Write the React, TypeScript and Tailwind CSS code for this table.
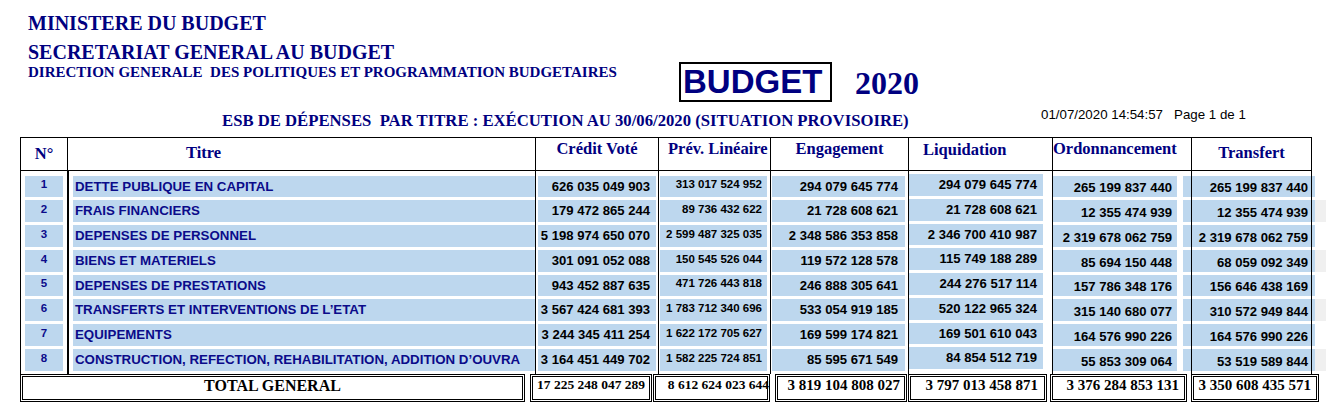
const serif = "font-['Liberation_Serif','Times_New_Roman',serif]";
const sans = "font-['Liberation_Sans',Arial,sans-serif]";

type Col = {
  w: string;
  hw: string;
  head: string;
  headCls: string;
  blue: string;
  text: string;
};

const cols: Col[] = [
  { w: "w-[46px]", hw: "w-[46px]", head: "N°", headCls: "justify-center pt-[7px]", blue: "mx-[4px]", text: "justify-center text-[11.5px] pb-[3px] text-[#0b0b8a]" },
  { w: "w-[466px]", hw: "w-[467px]", head: "Titre", headCls: "pl-[118px] pt-[6px]", blue: "ml-[4px]", text: "pl-[2px] text-[13.3px] text-[#0b0b8a]" },
  { w: "w-[122px]", hw: "w-[122px]", head: "Crédit Voté", headCls: "justify-center pt-[2px]", blue: "mx-[2px]", text: "justify-end pr-[6px] text-[13.1px]" },
  { w: "w-[111px]", hw: "w-[111px]", head: "Prév. Linéaire", headCls: "pl-[9px] pt-[2px]", blue: "ml-[1px] mr-[3px]", text: "justify-end pr-[5px] text-[11.5px] pb-[3px]" },
  { w: "w-[137px]", hw: "w-[137px]", head: "Engagement", headCls: "justify-center pt-[2px]", blue: "ml-[1px] mr-[3px]", text: "justify-end pr-[7px] text-[13.1px]" },
  { w: "w-[143px]", hw: "w-[143px]", head: "Liquidation", headCls: "pl-[14px] pt-[3px]", blue: "mr-[9px] -mt-[1.5px]", text: "justify-end pr-[6px] text-[13.1px]" },
  { w: "w-[138px]", hw: "w-[138px]", head: "Ordonnancement", headCls: "pt-[2px]", blue: "mr-[14px]", text: "justify-end pr-[5px] text-[13.1px] pt-[3px]" },
  { w: "w-[119px]", hw: "w-[119px]", head: "Transfert", headCls: "justify-center pt-[6px]", blue: "-ml-[9px] -mr-[4px]", text: "justify-end pr-[7px] text-[13.1px] pt-[3px]" },
];

const rows: string[][] = [
  ["1", "DETTE PUBLIQUE EN CAPITAL", "626 035 049 903", "313 017 524 952", "294 079 645 774", "294 079 645 774", "265 199 837 440", "265 199 837 440"],
  ["2", "FRAIS FINANCIERS", "179 472 865 244", "89 736 432 622", "21 728 608 621", "21 728 608 621", "12 355 474 939", "12 355 474 939"],
  ["3", "DEPENSES DE PERSONNEL", "5 198 974 650 070", "2 599 487 325 035", "2 348 586 353 858", "2 346 700 410 987", "2 319 678 062 759", "2 319 678 062 759"],
  ["4", "BIENS ET MATERIELS", "301 091 052 088", "150 545 526 044", "119 572 128 578", "115 749 188 289", "85 694 150 448", "68 059 092 349"],
  ["5", "DEPENSES DE PRESTATIONS", "943 452 887 635", "471 726 443 818", "246 888 305 641", "244 276 517 114", "157 786 348 176", "156 646 438 169"],
  ["6", "TRANSFERTS ET INTERVENTIONS DE L’ETAT", "3 567 424 681 393", "1 783 712 340 696", "533 054 919 185", "520 122 965 324", "315 140 680 077", "310 572 949 844"],
  ["7", "EQUIPEMENTS", "3 244 345 411 254", "1 622 172 705 627", "169 599 174 821", "169 501 610 043", "164 576 990 226", "164 576 990 226"],
  ["8", "CONSTRUCTION, REFECTION, REHABILITATION, ADDITION D’OUVRA", "3 164 451 449 702", "1 582 225 724 851", "85 595 671 549", "84 854 512 719", "55 853 309 064", "53 519 589 844"],
];

const totals = [
  { w: "w-[505px]", ml: "", v: "TOTAL GENERAL", cls: "justify-center pt-[2px] text-[16px]" },
  { w: "w-[122px]", ml: "ml-[5px]", v: "17 225 248 047 289", cls: "justify-center pt-[1px] text-[13.5px]" },
  { w: "w-[117px]", ml: "ml-[1px]", v: "8 612 624 023 644", cls: "justify-end pt-[1px] text-[13.5px]" },
  { w: "w-[132px]", ml: "ml-[5px]", v: "3 819 104 808 027", cls: "justify-end pr-[6px] pt-[1.5px] text-[15px]" },
  { w: "w-[139px]", ml: "ml-[1px]", v: "3 797 013 458 871", cls: "justify-end pr-[8px] pt-[1px] text-[15px]" },
  { w: "w-[137px]", ml: "ml-[3px]", v: "3 376 284 853 131", cls: "justify-end pr-[7px] pt-[1.5px] text-[15px]" },
  { w: "w-[128px]", ml: "ml-[4px]", v: "3 350 608 435 571", cls: "justify-end pr-[7px] pt-[1px] text-[15px]" },
];

function Sep({ wide }: { wide?: boolean }) {
  return <div className={`${wide ? "w-[2px]" : "w-[1px]"} relative z-10 shrink-0 self-stretch bg-black`} />;
}

export default function App() {
  return (
    <div className="h-[416px] w-[1330px] overflow-hidden bg-white">
      <div className={`pl-[28px] pt-[12.5px] ${serif} font-bold text-[#000080]`}>
        <div className="text-[20px] leading-[20px]">MINISTERE DU BUDGET</div>
        <div className="mt-[9px] text-[20px] leading-[20px]">SECRETARIAT GENERAL AU BUDGET</div>
        <div className="flex items-start">
          <div className="w-[651px] whitespace-pre pt-[3px] text-[15px] leading-[15px]">
            DIRECTION GENERALE  DES POLITIQUES ET PROGRAMMATION BUDGETAIRES
          </div>
          <div className={`h-[40px] w-[153px] border-2 border-black pl-[2px] ${sans} text-[33px] leading-[36px]`}>
            BUDGET
          </div>
          <div className="ml-[23px] mt-[3px] text-[32px] leading-[36px]">2020</div>
        </div>
      </div>

      <div className="mt-[6.5px] flex items-start">
        <div className={`ml-[222px] mt-[4px] w-[819px] whitespace-pre ${serif} text-[16.7px] font-bold leading-[18px] text-[#000080]`}>
          ESB DE DÉPENSES  PAR TITRE : EXÉCUTION AU 30/06/2020 (SITUATION PROVISOIRE)
        </div>
        <div className={`whitespace-pre ${sans} text-[13.3px] leading-[14px] text-black`}>
          01/07/2020 14:54:57   Page 1 de 1
        </div>
      </div>

      <div className="ml-[20px] mt-[6.7px]">
        {/* header */}
        <div className={`flex h-[34px] w-[1292px] border-y border-black ${serif} text-[16.5px] font-bold leading-[18px] text-[#000080]`}>
          <Sep />
          {cols.map((c) => (
            <div key={c.head} className="flex">
              <div className={`${c.hw} flex items-start whitespace-nowrap ${c.headCls}`}>{c.head}</div>
              <Sep />
            </div>
          ))}
        </div>

        {/* data rows */}
        <div className="flex">
          <Sep />
          {cols.map((c, i) => (
            <div key={c.head} className="flex">
              <div className={`${c.w} flex flex-col pt-[5px]`}>
                {rows.map((r) => (
                  <div key={r[0]} className="h-[24.75px]">
                    <div className={`${c.blue} flex h-[21.75px] items-center whitespace-nowrap bg-[#bdd7ee] ${sans} font-bold ${c.text}`}>
                      {r[i]}
                    </div>
                  </div>
                ))}
              </div>
              <Sep wide={i === 0} />
            </div>
          ))}
          <div className="flex w-[14px] flex-col pt-[5px]">
            {rows.map((r, ri) => (
              <div key={r[0]} className="h-[24.75px]">
                {ri % 2 === 1 && <div className="ml-[3px] h-[21.75px] bg-[#f0f0f0]" />}
              </div>
            ))}
          </div>
        </div>

        {/* totals */}
        <div className={`flex h-[28px] items-start ${serif} font-bold leading-[18px] text-black`}>
          {totals.map((t) => (
            <div
              key={t.v}
              className={`${t.w} ${t.ml} flex h-[28px] items-start whitespace-nowrap border border-black shadow-[inset_0_0_0_1px_#fff,inset_0_0_0_2px_#000] ${t.cls}`}
            >
              {t.v}
            </div>
          ))}
        </div>
      </div>
    </div>
  );
}
